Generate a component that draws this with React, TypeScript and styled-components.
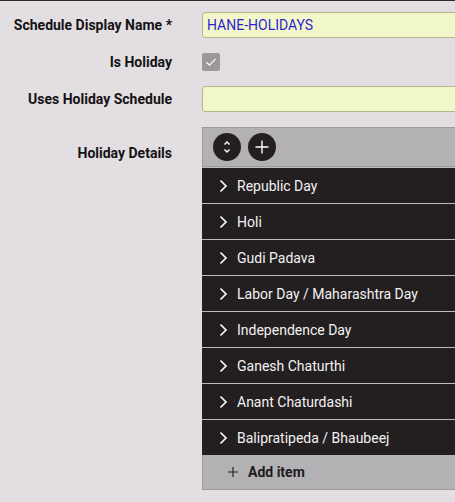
import { ReactElement } from "react";
import styled, { createGlobalStyle } from "styled-components";

const holidays = [
    "Republic Day",
    "Holi",
    "Gudi Padava",
    "Labor Day / Maharashtra Day",
    "Independence Day",
    "Ganesh Chaturthi",
    "Anant Chaturdashi",
    "Balipratipeda / Bhaubeej",
];

export default function App(): ReactElement {
    return (
        <>
            <GlobalStyle />
            <Page>
                <Form>
                    <Row>
                        <Label>Schedule Display Name *</Label>
                        <TextInput defaultValue="HANE-HOLIDAYS" />
                    </Row>
                    <Row>
                        <Label>Is Holiday</Label>
                        <CheckBox>
                            <svg width="14" height="14" viewBox="0 0 14 14" fill="none">
                                <path d="M2.5 7.2 5.6 10.2 11.6 3.8" stroke="#fff" strokeWidth="1.2" />
                            </svg>
                        </CheckBox>
                    </Row>
                    <Row>
                        <Label>Uses Holiday Schedule</Label>
                        <TextInput defaultValue="" />
                    </Row>
                    <Row $top={4}>
                        <Label $pad={13}>Holiday Details</Label>
                        <ListPanel>
                            <Toolbar>
                                <RoundButton>
                                    <svg width="14" height="18" viewBox="0 0 14 18" fill="none">
                                        <path d="M4.5 6.5 7 4 9.5 6.5M4.5 11.5 7 14 9.5 11.5" stroke="#fff" strokeWidth="1.4" />
                                    </svg>
                                </RoundButton>
                                <RoundButton>
                                    <svg width="16" height="16" viewBox="0 0 16 16" fill="none">
                                        <path d="M8 1.5v13M1.5 8h13" stroke="#fff" strokeWidth="1.4" />
                                    </svg>
                                </RoundButton>
                            </Toolbar>
                            {holidays.map(name => (
                                <Item key={name}>
                                    <svg width="10" height="14" viewBox="0 0 10 14" fill="none">
                                        <path d="M2.5 1.5 8 7 2.5 12.5" stroke="#fff" strokeWidth="1.6" />
                                    </svg>
                                    <ItemText>{name}</ItemText>
                                </Item>
                            ))}
                            <AddRow>
                                <svg width="10" height="10" viewBox="0 0 10 10" fill="none">
                                    <path d="M5 0v10M0 5h10" stroke="#222" strokeWidth="1.2" />
                                </svg>
                                <AddText>Add item</AddText>
                            </AddRow>
                        </ListPanel>
                    </Row>
                </Form>
            </Page>
        </>
    );
}

const GlobalStyle = createGlobalStyle`
    html, body {
        margin: 0;
        padding: 0;
        background: #e2dee2;
        overflow: hidden;
        font-family: Roboto, "Liberation Sans", sans-serif;
    }
`;

const Page = styled.div`
    width: 455px;
    height: 502px;
    border-top: 1.5px solid #2c2a2c;
    box-sizing: border-box;
    overflow: hidden;
`;

const Form = styled.div`
    width: 640px;
    display: flex;
    flex-direction: column;
    gap: 11px;
    padding-top: 10.5px;
`;

const Row = styled.div<{ $top?: number }>`
    display: flex;
    align-items: flex-start;
    gap: 30px;
    margin-top: ${p => p.$top ?? 0}px;
`;

const Label = styled.div<{ $pad?: number }>`
    width: 172px;
    flex-shrink: 0;
    text-align: right;
    font-size: 14px;
    font-weight: bold;
    line-height: 26px;
    color: #141214;
    padding-top: ${p => p.$pad ?? 0}px;
`;

const TextInput = styled.input`
    flex: 1;
    height: 26px;
    box-sizing: border-box;
    border: 1px solid #b2b68c;
    border-radius: 3px;
    background: #f2f7c9;
    padding: 0 4px;
    font-family: Roboto, "Liberation Sans", sans-serif;
    font-size: 14px;
    color: #2f1fd2;
    outline: none;
`;

const CheckBox = styled.div`
    width: 18px;
    height: 18px;
    margin-top: 4px;
    border-radius: 2px;
    background: #9b989b;
    display: flex;
    align-items: center;
    justify-content: center;
`;

const ListPanel = styled.div`
    flex: 1;
    display: flex;
    flex-direction: column;
`;

const Toolbar = styled.div`
    height: 40px;
    box-sizing: border-box;
    background: #b3b1b3;
    border: 1px solid #9c9a9c;
    display: flex;
    align-items: center;
    gap: 7px;
    padding-left: 10px;
`;

const RoundButton = styled.div`
    width: 28px;
    height: 28px;
    border-radius: 50%;
    background: #231f20;
    display: flex;
    align-items: center;
    justify-content: center;
`;

const Item = styled.div`
    height: 36px;
    box-sizing: border-box;
    border-top: 1px solid #bdbbbd;
    background: #231f20;
    display: flex;
    align-items: center;
    padding-left: 16px;
    gap: 9px;
    padding-top: 1px;
`;

const ItemText = styled.span`
    color: #f2f2f2;
    font-size: 14px;
`;

const AddRow = styled.div`
    height: 35px;
    box-sizing: border-box;
    background: #b3b1b3;
    border: 1px solid #9c9a9c;
    border-top: none;
    display: flex;
    align-items: center;
    padding-left: 25px;
    gap: 10px;
`;

const AddText = styled.span`
    font-size: 14px;
    font-weight: bold;
    color: #1e1c1e;
`;
